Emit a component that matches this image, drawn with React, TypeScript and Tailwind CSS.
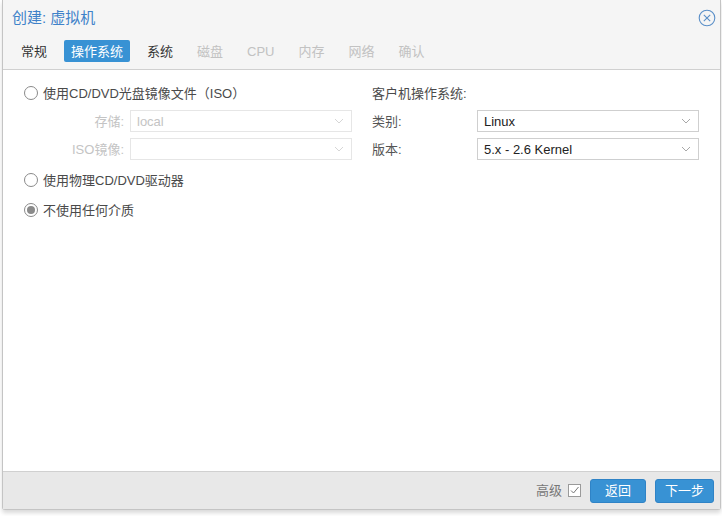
import React from 'react';

const font = { fontFamily: '"Liberation Sans", "Noto Sans CJK SC", sans-serif' };

function Chevron({ light }: { light?: boolean }) {
  return (
    <svg width="10" height="6" viewBox="0 0 10 6" className="shrink-0">
      <path d="M1 1 L5 5 L9 1" fill="none" stroke={light ? '#d6d6d6' : '#a8a8a8'} strokeWidth="1" />
    </svg>
  );
}

function Select({ value, disabled }: { value?: string; disabled?: boolean }) {
  return (
    <div
      className={`flex h-[22px] flex-1 items-center justify-between pl-[6px] pr-[7px] ${
        disabled ? 'border border-[#e6e6e6] text-[#c4c4c4]' : 'border border-[#cfcfcf] text-[#222]'
      }`}
    >
      <span className="text-[13px] leading-none">{value}</span>
      <Chevron light={disabled} />
    </div>
  );
}

function Radio({ checked, label }: { checked?: boolean; label: string }) {
  return (
    <div className="flex h-[22px] items-center gap-[5px]">
      <span className="flex h-[14px] w-[14px] items-center justify-center rounded-full border border-[#8a8a8a] bg-white">
        {checked && <span className="h-[8px] w-[8px] rounded-full bg-[#8a8a8a]" />}
      </span>
      <span className="text-[13px] leading-none text-[#4a4a4a]">{label}</span>
    </div>
  );
}

const tabs = [
  { label: '常规', state: 'normal' },
  { label: '操作系统', state: 'active' },
  { label: '系统', state: 'normal' },
  { label: '磁盘', state: 'disabled' },
  { label: 'CPU', state: 'disabled' },
  { label: '内存', state: 'disabled' },
  { label: '网络', state: 'disabled' },
  { label: '确认', state: 'disabled' },
];

export default function App() {
  return (
    <div className="h-[516px] w-[722px] overflow-hidden bg-white" style={font}>
      <div className="ml-[2px] flex h-[510px] w-[719px] flex-col rounded-b-[3px] border-x border-b border-[#c4c4c4] bg-[#f5f5f5] shadow-[0_3px_4px_rgba(0,0,0,0.15)]">
        {/* header */}
        <div className="flex h-[35px] items-center justify-between pl-[9px] pr-[4px]">
          <span className="text-[15px] leading-none text-[#3f82c9]">创建: 虚拟机</span>
          <svg width="18" height="18" viewBox="0 0 18 18">
            <circle cx="9" cy="9" r="7.8" fill="none" stroke="#5a8fc8" strokeWidth="1.1" />
            <path d="M5.8 5.8 L12.2 12.2 M12.2 5.8 L5.8 12.2" stroke="#5a8fc8" strokeWidth="1.1" />
          </svg>
        </div>

        {/* tabs */}
        <div className="flex h-[34px] items-center gap-[10px] pl-[11px] pb-[2px]">
          {tabs.map((t) => (
            <div
              key={t.label}
              className={`flex h-[22px] items-center px-[7px] text-[13px] leading-none ${
                t.state === 'active'
                  ? 'rounded-[2px] bg-[#3892d4] text-white'
                  : t.state === 'disabled'
                  ? 'text-[#c2c2c2]'
                  : 'text-[#333]'
              }`}
            >
              {t.label}
            </div>
          ))}
        </div>

        {/* content */}
        <div className="flex flex-1 gap-[20px] border-y border-[#d0d0d0] bg-white pl-[21px] pr-[19px] pt-[12px]">
          <div className="flex w-[328px] flex-col">
            <Radio label="使用CD/DVD光盘镜像文件（ISO）" />
            <div className="mt-[6px] flex items-center">
              <span className="w-[101px] pr-[1px] text-right text-[13px] leading-none text-[#c4c4c4]">存储:</span>
              <div className="ml-[5px] flex flex-1">
                <Select value="local" disabled />
              </div>
            </div>
            <div className="mt-[6px] flex items-center">
              <span className="w-[101px] pr-[1px] text-right text-[13px] leading-none text-[#c4c4c4]">ISO镜像:</span>
              <div className="ml-[5px] flex flex-1">
                <Select disabled />
              </div>
            </div>
            <div className="mt-[9px]">
              <Radio label="使用物理CD/DVD驱动器" />
            </div>
            <div className="mt-[8px]">
              <Radio checked label="不使用任何介质" />
            </div>
          </div>

          <div className="flex w-[327px] flex-col">
            <div className="flex h-[22px] items-center text-[13px] leading-none text-[#4a4a4a]">客户机操作系统:</div>
            <div className="mt-[6px] flex items-center">
              <span className="w-[105px] text-[13px] leading-none text-[#555]">类别:</span>
              <Select value="Linux" />
            </div>
            <div className="mt-[6px] flex items-center">
              <span className="w-[105px] text-[13px] leading-none text-[#555]">版本:</span>
              <Select value="5.x - 2.6 Kernel" />
            </div>
          </div>
        </div>

        {/* footer */}
        <div className="flex h-[37px] items-center justify-end gap-[9px] bg-[#e8e8e8] pr-[6px]">
          <div className="flex items-center gap-[6px]">
            <span className="text-[13px] leading-none text-[#777]">高级</span>
            <span className="flex h-[13px] w-[13px] items-center justify-center border border-[#9a9a9a] bg-white">
              <svg width="11" height="11" viewBox="0 0 11 11">
                <path d="M2 5.5 L4.5 8 L9.5 2" fill="none" stroke="#777" strokeWidth="1" />
              </svg>
            </span>
          </div>
          <button className="flex h-[24px] w-[56px] items-center justify-center rounded-[3px] border border-[#2f83c6] bg-[#3892d4] text-[13px] leading-none text-white">
            返回
          </button>
          <button className="flex h-[24px] w-[59px] items-center justify-center rounded-[3px] border border-[#2f83c6] bg-[#3892d4] text-[13px] leading-none text-white">
            下一步
          </button>
        </div>
      </div>
    </div>
  );
}
